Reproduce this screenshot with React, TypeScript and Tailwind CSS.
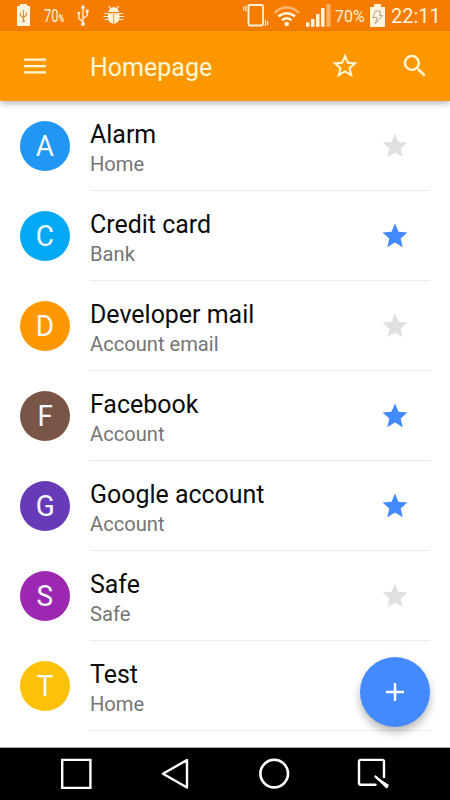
import React from 'react';

type Entry = { name: string; category: string; color: string; starred: boolean };

const entries: Entry[] = [
  { name: 'Alarm', category: 'Home', color: 'bg-[#2196f3]', starred: false },
  { name: 'Credit card', category: 'Bank', color: 'bg-[#03a9f4]', starred: true },
  { name: 'Developer mail', category: 'Account email', color: 'bg-[#ff9800]', starred: false },
  { name: 'Facebook', category: 'Account', color: 'bg-[#795548]', starred: true },
  { name: 'Google account', category: 'Account', color: 'bg-[#673ab7]', starred: true },
  { name: 'Safe', category: 'Safe', color: 'bg-[#9c27b0]', starred: false },
  { name: 'Test', category: 'Home', color: 'bg-[#ffc107]', starred: false },
];

function StatusBar() {
  return (
    <div className="flex h-[31px] shrink-0 items-start bg-[#f57c00] text-[#fff3dc]">
      <svg className="ml-4 h-[31px] w-4 shrink-0" viewBox="16 0 16 31" fill="none">
        <path d="M20 4h7v2h3v20H17V6h3z" fill="currentColor" />
        <path d="M23.500 10v11M20.500 12.500v3l3 2.500M26.500 12.500v2.500l-3 2.500" stroke="#e98b2c" strokeWidth="1.100" />
        <circle cx="23.500" cy="21" r="1.300" fill="#e98b2c" />
      </svg>
      <div className="ml-3 flex h-[31px] w-[22px] origin-left scale-x-[0.7] items-baseline whitespace-nowrap leading-[32px]">
        <span className="text-[18.500px]">70</span>
        <span className="text-[11px] font-bold">%</span>
      </div>
      <svg className="ml-[9px] h-[31px] w-[18px] shrink-0" viewBox="75 0 18 31" fill="none" stroke="currentColor" strokeWidth="1.400">
        <path d="M83 7v17M83 21.500l-4.200-3v-5M83 18.500l4.200-3v-4" />
        <path d="M83 4.500l2.500 4h-5z" fill="currentColor" stroke="none" />
        <circle cx="83" cy="24" r="2" fill="currentColor" stroke="none" />
        <circle cx="78.800" cy="13" r="1.500" fill="currentColor" stroke="none" />
        <path d="M85.700 9.500h3v3h-3z" fill="currentColor" stroke="none" />
      </svg>
      <svg className="ml-2.5 h-[31px] w-[22px] shrink-0" viewBox="103 0 22 31" fill="none" stroke="currentColor" strokeWidth="1.200">
        <path d="M108.500 12a5.200 4.700 0 0 1 10.400 0z" fill="currentColor" stroke="none" />
        <path d="M108 13.200h11.400v4.500c0 7.700-11.400 7.700-11.400 0z" fill="currentColor" stroke="none" />
        <path d="M110.500 8.700l-1.800-2.700M116.900 8.700l1.800-2.700M104.500 13.500h4M103.500 16.500h5M104.500 19.500h4M119 13.500h4M119 16.500h5M119 19.500h4" />
        <path d="M113.700 14v9" stroke="#f57c00" strokeWidth="0.800" />
      </svg>
      <svg className="ml-[118px] h-[31px] w-[26px] shrink-0" viewBox="243 0 26 31" fill="none" stroke="currentColor">
        <rect x="248.500" y="5" width="14.500" height="20.500" rx="1.500" strokeWidth="1.800" />
        <path d="M246 5.500v6M243.700 6.500v4M265.500 20v6M267.700 21v4" strokeWidth="1.200" />
      </svg>
      <svg className="ml-[5px] h-[31px] w-[28px] shrink-0" viewBox="274 0 28 31" fill="none" stroke="currentColor" strokeWidth="2.500">
        <path d="M274.500 13c6.500-7.500 18-7.500 24.500 0" className="opacity-50" />
        <path d="M278.500 16.500c5-4.500 11.500-4.500 16.500 0M282 20.300c3-2.600 6.500-2.600 9.500 0" />
        <circle cx="286.700" cy="24" r="2.300" fill="currentColor" stroke="none" />
      </svg>
      <svg className="ml-[3px] h-[31px] w-[27px] shrink-0" viewBox="305 0 27 31" fill="currentColor">
        <path d="M306 22.500h3.500v4.200H306zM311 19h3.500v7.700H311zM316 14h3.500v12.700H316zM321 8h3.500v18.700H321z" />
        <path d="M326.500 4h4v22.700h-4z" className="opacity-45" />
      </svg>
      <span className="ml-[3px] w-[30px] whitespace-nowrap text-[16px] leading-[33px]">70%</span>
      <svg className="ml-[5px] h-[31px] w-[15px] shrink-0" viewBox="370 0 15 31">
        <path d="M374 4h7v3h4v20h-15V7h4z" fill="currentColor" />
        <path d="M375.500 11h5l-1 4.500h3l-7 8 1.500-6h-4z" fill="none" stroke="#b0a090" strokeWidth="1" />
      </svg>
      <span className="ml-1.5 whitespace-nowrap text-[20px] leading-[32px]">22:11</span>
    </div>
  );
}

function AppBar() {
  return (
    <header className="relative flex h-[70px] shrink-0 items-center bg-[#ff9800] text-[#fff8d6] shadow-[0_3px_6px_rgba(0,0,0,0.25)]">
      <svg className="ml-[23px] h-[18px] w-6" viewBox="0 0 24 18" fill="currentColor">
        <path d="M1 1.500h22v2.300H1zM1 7.900h22v2.300H1zM1 14.200h22v2.300H1z" />
      </svg>
      <h1 className="ml-[43px] mt-1 flex-1 text-[25px] leading-[30px]">Homepage</h1>
      <svg className="mr-[40px] h-[30px] w-[30px]" viewBox="0 0 24 24" fill="currentColor">
        <path d="M22 9.240l-7.190-.62L12 2 9.190 8.630 2 9.240l5.460 4.730L5.820 21 12 17.270 18.180 21l-1.630-7.030L22 9.240zM12 15.400l-3.760 2.270 1-4.280-3.320-2.880 4.380-.38L12 6.100l1.710 4.040 4.380.38-3.320 2.880 1 4.280L12 15.400z" />
      </svg>
      <svg className="mr-5 h-[30px] w-[30px]" viewBox="0 0 24 24" fill="currentColor">
        <path d="M15.500 14h-.79l-.28-.27A6.471 6.471 0 0 0 16 9.500 6.500 6.500 0 1 0 9.500 16c1.610 0 3.090-.59 4.230-1.570l.27.28v.79l5 4.990L20.490 19l-4.990-5zm-6 0C7.010 14 5 11.990 5 9.500S7.010 5 9.500 5 14 7.010 14 9.500 11.990 14 9.500 14z" />
      </svg>
    </header>
  );
}

function Row({ entry }: { entry: Entry }) {
  return (
    <li className="flex h-[90px] shrink-0 pl-5 pr-5">
      <div className={`mt-5 flex size-[50px] shrink-0 items-center justify-center rounded-full text-[#f4faff] ${entry.color}`}>
        <span className="scale-x-[0.93] text-[30px] leading-none">{entry.name[0]}</span>
      </div>
      <div className="ml-5 flex flex-1 items-start border-b border-[#ececec] pt-[19px]">
        <div className="flex-1 whitespace-nowrap">
          <div className="text-[24.950px] leading-[30px] text-[#0b0b0b]">{entry.name}</div>
          <div className="text-[20.150px] leading-[29px] text-[#757575]">{entry.category}</div>
        </div>
        <svg className={`mr-5 mt-[11px] h-[30px] w-[30px] ${entry.starred ? 'text-[#448aff]' : 'text-[#e0e0e0]'}`} viewBox="0 0 24 24" fill="currentColor">
          <path d="M12 17.270L18.180 21l-1.640-7.030L22 9.240l-7.190-.61L12 2 9.190 8.630 2 9.240l5.460 4.730L5.820 21z" />
        </svg>
      </div>
    </li>
  );
}

function NavBar() {
  return (
    <nav className="flex h-[53px] shrink-0 items-start border-t border-[#aaa] bg-black pl-[60px] text-white">
      <svg className="h-[52px] w-8" viewBox="60 748 32 52" fill="none" stroke="currentColor" strokeWidth="2.400">
        <path d="M62.200 759.900h28.200v28H62.200z" />
      </svg>
      <svg className="ml-[68px] h-[52px] w-[30px]" viewBox="160 748 30 52" fill="none" stroke="currentColor" strokeWidth="2.400" strokeLinejoin="round">
        <path d="M187 760v27.500l-24-13.800z" />
      </svg>
      <svg className="ml-[68px] h-[52px] w-8" viewBox="258 748 32 52" fill="none" stroke="currentColor" strokeWidth="2.600">
        <circle cx="274.200" cy="773.600" r="13.800" />
      </svg>
      <svg className="ml-[66px] h-[52px] w-[34px]" viewBox="356 748 34 52" fill="none" stroke="currentColor" strokeWidth="2.400" strokeLinecap="round">
        <path d="M375.500 784.700h-14.700q-1.800 0-1.800-1.800v-21.200q0-1.800 1.800-1.800h21.400q1.800 0 1.800 1.800v15.300" />
        <path d="M374.300 775.300l14.700 9.800-2.700 3.500z" fill="currentColor" stroke="none" />
        <path d="M375.500 776.600l11.500 10.200" />
      </svg>
    </nav>
  );
}

export default function App() {
  return (
    <div className="relative flex h-[800px] w-[450px] flex-col overflow-hidden bg-white font-[Roboto,sans-serif]">
      <StatusBar />
      <AppBar />
      <ul className="flex min-h-0 flex-1 flex-col overflow-hidden">
        {entries.map((entry) => (
          <Row key={entry.name} entry={entry} />
        ))}
      </ul>
      <NavBar />
      <button className="absolute right-5 top-[657px] flex size-[70px] items-center justify-center rounded-full bg-[#448aff] shadow-[0_5px_9px_rgba(0,0,0,0.28)]" aria-label="Add">
        <svg className="size-[18px]" viewBox="0 0 18 18" stroke="#fff" strokeWidth="2.500">
          <path d="M9 0v18M0 9h18" />
        </svg>
      </button>
    </div>
  );
}
